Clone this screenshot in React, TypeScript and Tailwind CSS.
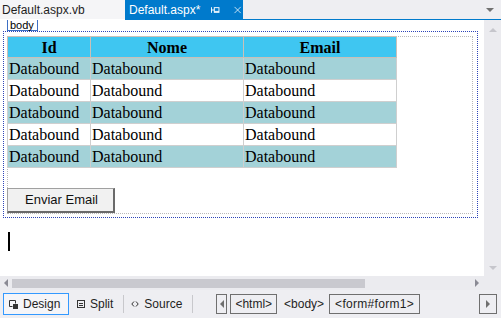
import { X } from "lucide-react"

const rows = [0, 1, 2, 3, 4]

function Tri({ dir, color }: { dir: "up" | "down" | "left" | "right"; color: string }) {
  const pts = {
    up: "0,4 4,0 8,4",
    down: "0,0 8,0 4,4",
    left: "4,0 4,8 0,4",
    right: "0,0 0,8 4,4",
  }[dir]
  const w = dir === "up" || dir === "down" ? 8 : 4
  const h = dir === "up" || dir === "down" ? 4 : 8
  return (
    <svg width={w} height={h} viewBox={`0 0 ${w} ${h}`}>
      <polygon points={pts} fill={color} />
    </svg>
  )
}

export default function App() {
  return (
    <div className="w-[501px] h-[318px] flex flex-col bg-white overflow-hidden font-['Liberation_Sans',Arial,sans-serif]">
      {/* tab well */}
      <div className="h-[19px] flex items-stretch bg-[#eeeef2] text-[12px]">
        <div className="w-[125px] flex items-center pl-[2px] text-[#1e1e1e] bg-[#f5f5f7]">Default.aspx.vb</div>
        <div className="w-[118px] flex items-center pl-[4px] bg-[#007acc] text-white">
          <span>Default.aspx*</span>
          <svg width="10" height="8" viewBox="0 0 10 8" className="ml-[11px]">
            <path d="M0.5 1v6M0.5 4h3" stroke="white" fill="none" />
            <rect x="3.5" y="1.5" width="5" height="5" stroke="white" fill="none" />
            <path d="M3.5 5.5h5" stroke="white" />
          </svg>
          <X size={12} strokeWidth={1.6} className="ml-[11px]" />
        </div>
        <div className="flex-1 flex items-center justify-end pr-[7px]">
          <Tri dir="down" color="#717171" />
        </div>
      </div>
      <div className="h-[1px] flex">
        <div className="w-[125px] bg-white" />
        <div className="flex-1 bg-[#007acc]" />
      </div>

      {/* design surface + vertical scrollbar */}
      <div className="flex h-[256px]">
        <div className="flex-1 flex flex-col bg-white">
          <div className="ml-[7px] h-[11px] w-[31px] border border-[#3d6fc4] border-t-0 text-[11px] leading-[10px] pl-[2px] text-black">
            body
          </div>
          <div className="ml-[3px] w-[475px] h-[187px] border border-dotted border-[#2d44b8] flex flex-col">
            <div className="ml-[3px] mt-[4px] w-[466px] h-[178px] border border-dotted border-[#b9b9b9] flex flex-col">
              <table className="-mt-px -ml-px w-[390px] border-collapse border border-[#a9a9a9] font-['Liberation_Serif','Times_New_Roman',serif] text-[16px] text-black">
                <thead>
                  <tr className="h-[21px] bg-[#3fc6f1]">
                    <th className="w-[83px] border border-[#c9c0b8] font-bold p-0 leading-[19px]">Id</th>
                    <th className="w-[153px] border border-[#c9c0b8] font-bold p-0 leading-[19px]">Nome</th>
                    <th className="border border-[#c9c0b8] font-bold p-0 leading-[19px]">Email</th>
                  </tr>
                </thead>
                <tbody>
                  {rows.map((r) => (
                    <tr key={r} className={r % 2 === 0 ? "h-[22px] bg-[#a3d2d8]" : "h-[22px] bg-white"}>
                      <td className="border border-[#cfcfcf] p-0 pl-[1px] leading-[20px]">Databound</td>
                      <td className="border border-[#cfcfcf] p-0 pl-[1px] leading-[20px]">Databound</td>
                      <td className="border border-[#cfcfcf] p-0 pl-[1px] leading-[20px]">Databound</td>
                    </tr>
                  ))}
                </tbody>
              </table>
              <button className="-ml-px mt-[20px] w-[108px] h-[26px] bg-[#f1f1f1] border-t border-l border-[#a0a0a0] border-r-2 border-b-2 border-r-[#6a6a6a] border-b-[#6a6a6a] text-[13px] text-[#111] flex items-center pl-[17px]">
                Enviar Email
              </button>
            </div>
          </div>
          <div className="ml-[8px] mt-[14px] w-[2px] h-[19px] bg-black" />
        </div>
        <div className="w-[17px] bg-[#ebebef] flex flex-col items-center justify-between pt-[8px] pb-[6px]">
          <Tri dir="up" color="#c6c6cc" />
          <Tri dir="down" color="#c6c6cc" />
        </div>
      </div>

      {/* horizontal scrollbar */}
      <div className="h-[14px] flex items-center bg-[#ebebef]">
        <div className="w-[12px] flex justify-center">
          <Tri dir="left" color="#8a8a94" />
        </div>
        <div className="w-[353px] h-[9px] bg-[#c9c9cf]" />
        <div className="flex-1 flex justify-end pr-[22px]">
          <Tri dir="right" color="#8a8a94" />
        </div>
      </div>

      {/* status bar */}
      <div className="flex-1 flex items-center bg-[#eeeef2] text-[12px] text-[#1e1e1e] pl-[3px]">
        <div className="h-[22px] w-[66px] border border-[#3399ff] bg-[#f5f5f8] flex items-center pl-[5px] gap-[5px]">
          <svg width="9" height="9" viewBox="0 0 9 9">
            <path d="M0.5 0.5h6v3M0.5 0.5v6h3" stroke="#333" fill="none" />
            <rect x="4" y="4" width="5" height="5" fill="#333" />
          </svg>
          <span>Design</span>
        </div>
        <div className="ml-[8px] flex items-center gap-[5px]">
          <svg width="8" height="8" viewBox="0 0 8 8">
            <rect x="0.5" y="0.5" width="7" height="7" stroke="#333" fill="none" />
            <path d="M2 3.5h4M2 5.5h4" stroke="#333" />
          </svg>
          <span>Split</span>
        </div>
        <div className="ml-[10px] w-px h-[18px] bg-[#c8c8cc]" />
        <div className="ml-[7px] flex items-center gap-[5px]">
          <svg width="8" height="8" viewBox="0 0 8 8">
            <path d="M3 1.5L0.8 4 3 6.5M5 1.5L7.2 4 5 6.5" stroke="#333" fill="none" />
          </svg>
          <span>Source</span>
        </div>
        <div className="ml-[10px] w-px h-[18px] bg-[#c8c8cc]" />
        <div className="ml-[23px] h-[20px] w-[11px] border border-[#6f6f6f] flex items-center justify-center">
          <Tri dir="left" color="#6f6f6f" />
        </div>
        <div className="ml-[3px] h-[20px] px-[4px] border border-[#6f6f6f] flex items-center">&lt;html&gt;</div>
        <div className="ml-[3px] h-[20px] px-[4px] flex items-center">&lt;body&gt;</div>
        <div className="ml-[1px] h-[20px] px-[5px] border border-[#6f6f6f] flex items-center tracking-[0.3px]">&lt;form#form1&gt;</div>
        <div className="ml-auto mr-[4px] h-[20px] w-[18px] border border-[#6f6f6f] flex items-center justify-center">
          <Tri dir="right" color="#6f6f6f" />
        </div>
      </div>
    </div>
  )
}
